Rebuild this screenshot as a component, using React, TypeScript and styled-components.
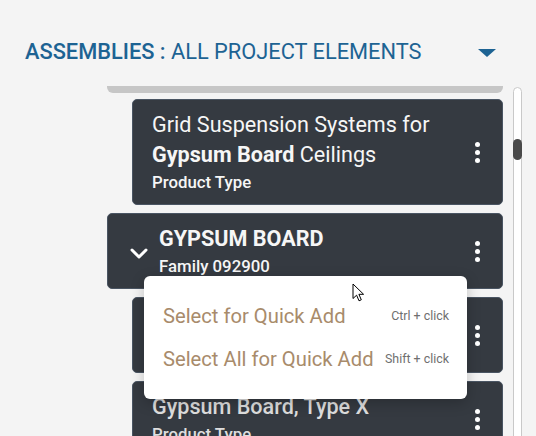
import React from 'react'
import styled, { createGlobalStyle } from 'styled-components'

const GlobalStyle = createGlobalStyle`
  html, body {
    margin: 0;
    padding: 0;
    background: #f4f4f4;
    font-family: Roboto, 'Liberation Sans', sans-serif;
    overflow: hidden;
  }
`

type Item = {
  indent: boolean
  title: React.ReactNode
  subtitle: string
  expandable?: boolean
  dim?: boolean
}

const items: Item[] = [
  {
    indent: true,
    title: (
      <>
        Grid Suspension Systems for <b>Gypsum Board</b> Ceilings
      </>
    ),
    subtitle: 'Product Type',
  },
  { indent: false, title: <b>GYPSUM BOARD</b>, subtitle: 'Family 092900', expandable: true },
  { indent: true, title: <b>Gypsum Board</b>, subtitle: 'Product Type' },
  { indent: true, title: 'Gypsum Board, Type X', subtitle: 'Product Type', dim: true },
]

const ChevronIcon = () => (
  <svg width="18" height="11" viewBox="0 0 18 11" fill="none">
    <path d="M2 2 L9 9 L16 2" stroke="#ffffff" strokeWidth="3" strokeLinecap="round" strokeLinejoin="round" />
  </svg>
)

const CursorIcon = () => (
  <svg width="14" height="20" viewBox="0 0 14 20">
    <path
      d="M1 1 L1 15.5 L4.6 12.2 L7 17.8 L9.3 16.8 L6.9 11.3 L11.6 11.3 Z"
      fill="#ffffff"
      stroke="#000000"
      strokeWidth="1"
      strokeLinejoin="round"
    />
  </svg>
)

export default function App(): React.ReactElement {
  return (
    <>
      <GlobalStyle />
      <Page>
        <Header>
          <Title>
            <strong>ASSEMBLIES :</strong> ALL PROJECT ELEMENTS
          </Title>
          <Caret />
        </Header>

        <Body>
          <List>
            <ClippedBar />
            {items.map((item, i) => (
              <Card key={i} $indent={item.indent}>
                {item.expandable && (
                  <ChevronWrap>
                    <ChevronIcon />
                  </ChevronWrap>
                )}
                <CardText $dim={item.dim}>
                  <CardTitle $weight={item.dim ? 500 : 400}>{item.title}</CardTitle>
                  <CardSubtitle>{item.subtitle}</CardSubtitle>
                </CardText>
                <Kebab>
                  <Dot />
                  <Dot />
                  <Dot />
                </Kebab>
              </Card>
            ))}
          </List>

          <ScrollTrack>
            <ScrollThumb />
          </ScrollTrack>
        </Body>

        <Menu>
          <MenuItem>
            <MenuLabel>Select for Quick Add</MenuLabel>
            <Shortcut>Ctrl + click</Shortcut>
          </MenuItem>
          <MenuItem>
            <MenuLabel>Select All for Quick Add</MenuLabel>
            <Shortcut>Shift + click</Shortcut>
          </MenuItem>
        </Menu>

        <Cursor>
          <CursorIcon />
        </Cursor>
      </Page>
    </>
  )
}

const Page = styled.div`
  position: relative;
  width: 536px;
  height: 436px;
  overflow: hidden;
  padding: 37px 40px 0 25px;
  box-sizing: border-box;
`

const Header = styled.div`
  display: flex;
  justify-content: space-between;
  align-items: center;
  height: 30px;
`

const Title = styled.div`
  font-size: 21.8px;
  line-height: 30px;
  color: #1d6393;

  strong {
    font-weight: 500;
  }
`

const Caret = styled.div`
  width: 0;
  height: 0;
  border-left: 9px solid transparent;
  border-right: 9px solid transparent;
  border-top: 8px solid #1d6393;
  margin-top: 2px;
`

const Body = styled.div`
  display: flex;
  align-items: flex-start;
  margin-top: 19px;
  margin-left: 82px;
  margin-right: -26px;
  gap: 10px;
`

const List = styled.div`
  flex: 1;
  display: flex;
  flex-direction: column;
  gap: 8px;
`

const ClippedBar = styled.div`
  height: 7px;
  margin-bottom: -2px;
  background: #c6c6c6;
  border-radius: 0 0 6px 6px;
`

const Card = styled.div<{ $indent: boolean }>`
  display: flex;
  align-items: center;
  margin-left: ${({ $indent }) => ($indent ? 25 : 0)}px;
  padding: 10px 22px 10px ${({ $indent }) => ($indent ? 19 : 22)}px;
  background: #353a41;
  border: 1px solid #4a5563;
  border-radius: 5px;
  color: #f6f6f6;
`

const ChevronWrap = styled.div`
  display: flex;
  width: 18px;
  margin-right: 11px;
  margin-top: 4px;
`

const CardText = styled.div<{ $dim?: boolean }>`
  flex: 1;
  min-width: 0;
  color: ${({ $dim }) => ($dim ? '#dedede' : '#f6f6f6')};
`

const CardTitle = styled.div<{ $weight: number }>`
  font-size: 21.6px;
  line-height: 30px;
  font-weight: ${({ $weight }) => $weight};

  b {
    font-weight: 700;
  }
`

const CardSubtitle = styled.div`
  font-size: 16.8px;
  line-height: 24px;
  font-weight: 500;
`

const Kebab = styled.div`
  display: flex;
  flex-direction: column;
  gap: 3px;
  margin-left: 12px;
`

const Dot = styled.span`
  width: 5px;
  height: 5px;
  border-radius: 50%;
  background: #ffffff;
`

const ScrollTrack = styled.div`
  width: 9px;
  height: 360px;
  margin-top: 1px;
  background: #ffffff;
  border: 1px solid #c9c9c9;
  border-radius: 5px;
  box-sizing: border-box;
  padding-top: 51px;
`

const ScrollThumb = styled.div`
  width: 9px;
  height: 21px;
  margin-left: -1px;
  border-radius: 5px;
  background: #4a4a4a;
`

const Menu = styled.div`
  position: absolute;
  left: 144px;
  top: 276px;
  width: 323px;
  box-sizing: border-box;
  padding: 19px 18px 18px 19px;
  background: #ffffff;
  border-radius: 6px;
  box-shadow: 0 4px 14px rgba(0, 0, 0, 0.22);
`

const MenuItem = styled.div`
  display: flex;
  justify-content: space-between;
  align-items: center;
  height: 43px;
`

const MenuLabel = styled.span`
  font-size: 20.2px;
  line-height: 43px;
  color: #a88b6b;
`

const Shortcut = styled.span`
  font-size: 12.4px;
  color: #6f6f6f;
  margin-bottom: 2px;
`

const Cursor = styled.div`
  position: absolute;
  left: 352px;
  top: 283px;
  display: flex;
`
